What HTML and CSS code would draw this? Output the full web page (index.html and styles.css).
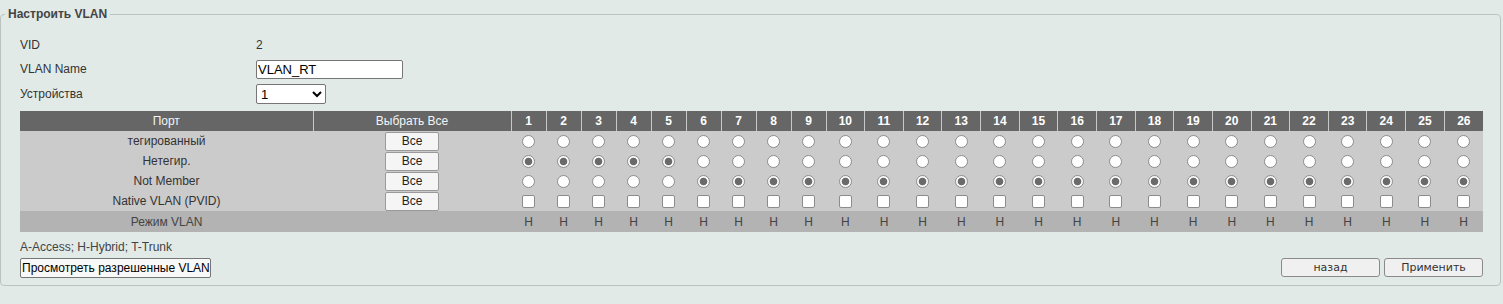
FILE: index.html
```html
<!DOCTYPE html>
<html lang="ru">
<head>
<meta charset="utf-8">
<title>Настроить VLAN</title>
<link rel="stylesheet" href="styles.css">
</head>
<body>
<fieldset class="panel">
  <legend class="panel-title">Настроить VLAN</legend>
  <div class="content">
    <div class="form">
      <div class="f-label">VID</div><div class="f-value">2</div>
      <div class="f-label">VLAN Name</div><div class="f-value"><input class="txt" type="text" value="VLAN_RT"></div>
      <div class="f-label r3">Устройства</div><div class="f-value r3"><select class="sel"><option>1</option></select></div>
    </div>
    <table class="ports">
      <colgroup>
        <col class="c-port"><col class="c-all">
        <col class="c-n"><col class="c-n"><col class="c-n"><col class="c-n"><col class="c-n"><col class="c-n"><col class="c-n"><col class="c-n"><col class="c-n">
        <col><col><col><col><col><col><col><col><col><col><col><col><col><col><col><col><col>
      </colgroup>
      <thead>
        <tr class="head">
          <th class="h-text">Порт</th><th class="h-text">Выбрать Все</th>
          <th>1</th><th>2</th><th>3</th><th>4</th><th>5</th><th>6</th><th>7</th><th>8</th><th>9</th><th>10</th><th>11</th><th>12</th><th>13</th>
          <th>14</th><th>15</th><th>16</th><th>17</th><th>18</th><th>19</th><th>20</th><th>21</th><th>22</th><th>23</th><th>24</th><th>25</th><th>26</th>
        </tr>
      </thead>
      <tbody>
        <tr class="row">
          <td>тегированный</td><td><button class="all" type="button">Все</button></td>
          <td><input class="rd" type="radio" name="p1"></td><td><input class="rd" type="radio" name="p2"></td><td><input class="rd" type="radio" name="p3"></td><td><input class="rd" type="radio" name="p4"></td><td><input class="rd" type="radio" name="p5"></td><td><input class="rd" type="radio" name="p6"></td><td><input class="rd" type="radio" name="p7"></td><td><input class="rd" type="radio" name="p8"></td><td><input class="rd" type="radio" name="p9"></td><td><input class="rd" type="radio" name="p10"></td><td><input class="rd" type="radio" name="p11"></td><td><input class="rd" type="radio" name="p12"></td><td><input class="rd" type="radio" name="p13"></td>
          <td><input class="rd" type="radio" name="p14"></td><td><input class="rd" type="radio" name="p15"></td><td><input class="rd" type="radio" name="p16"></td><td><input class="rd" type="radio" name="p17"></td><td><input class="rd" type="radio" name="p18"></td><td><input class="rd" type="radio" name="p19"></td><td><input class="rd" type="radio" name="p20"></td><td><input class="rd" type="radio" name="p21"></td><td><input class="rd" type="radio" name="p22"></td><td><input class="rd" type="radio" name="p23"></td><td><input class="rd" type="radio" name="p24"></td><td><input class="rd" type="radio" name="p25"></td><td><input class="rd" type="radio" name="p26"></td>
        </tr>
        <tr class="row">
          <td>Нетегир.</td><td><button class="all" type="button">Все</button></td>
          <td><input class="rd" type="radio" name="p1" checked></td><td><input class="rd" type="radio" name="p2" checked></td><td><input class="rd" type="radio" name="p3" checked></td><td><input class="rd" type="radio" name="p4" checked></td><td><input class="rd" type="radio" name="p5" checked></td><td><input class="rd" type="radio" name="p6"></td><td><input class="rd" type="radio" name="p7"></td><td><input class="rd" type="radio" name="p8"></td><td><input class="rd" type="radio" name="p9"></td><td><input class="rd" type="radio" name="p10"></td><td><input class="rd" type="radio" name="p11"></td><td><input class="rd" type="radio" name="p12"></td><td><input class="rd" type="radio" name="p13"></td>
          <td><input class="rd" type="radio" name="p14"></td><td><input class="rd" type="radio" name="p15"></td><td><input class="rd" type="radio" name="p16"></td><td><input class="rd" type="radio" name="p17"></td><td><input class="rd" type="radio" name="p18"></td><td><input class="rd" type="radio" name="p19"></td><td><input class="rd" type="radio" name="p20"></td><td><input class="rd" type="radio" name="p21"></td><td><input class="rd" type="radio" name="p22"></td><td><input class="rd" type="radio" name="p23"></td><td><input class="rd" type="radio" name="p24"></td><td><input class="rd" type="radio" name="p25"></td><td><input class="rd" type="radio" name="p26"></td>
        </tr>
        <tr class="row">
          <td>Not Member</td><td><button class="all" type="button">Все</button></td>
          <td><input class="rd" type="radio" name="p1"></td><td><input class="rd" type="radio" name="p2"></td><td><input class="rd" type="radio" name="p3"></td><td><input class="rd" type="radio" name="p4"></td><td><input class="rd" type="radio" name="p5"></td><td><input class="rd" type="radio" name="p6" checked></td><td><input class="rd" type="radio" name="p7" checked></td><td><input class="rd" type="radio" name="p8" checked></td><td><input class="rd" type="radio" name="p9" checked></td><td><input class="rd" type="radio" name="p10" checked></td><td><input class="rd" type="radio" name="p11" checked></td><td><input class="rd" type="radio" name="p12" checked></td><td><input class="rd" type="radio" name="p13" checked></td>
          <td><input class="rd" type="radio" name="p14" checked></td><td><input class="rd" type="radio" name="p15" checked></td><td><input class="rd" type="radio" name="p16" checked></td><td><input class="rd" type="radio" name="p17" checked></td><td><input class="rd" type="radio" name="p18" checked></td><td><input class="rd" type="radio" name="p19" checked></td><td><input class="rd" type="radio" name="p20" checked></td><td><input class="rd" type="radio" name="p21" checked></td><td><input class="rd" type="radio" name="p22" checked></td><td><input class="rd" type="radio" name="p23" checked></td><td><input class="rd" type="radio" name="p24" checked></td><td><input class="rd" type="radio" name="p25" checked></td><td><input class="rd" type="radio" name="p26" checked></td>
        </tr>
        <tr class="row">
          <td>Native VLAN (PVID)</td><td><button class="all" type="button">Все</button></td>
          <td><input class="cb" type="checkbox"></td><td><input class="cb" type="checkbox"></td><td><input class="cb" type="checkbox"></td><td><input class="cb" type="checkbox"></td><td><input class="cb" type="checkbox"></td><td><input class="cb" type="checkbox"></td><td><input class="cb" type="checkbox"></td><td><input class="cb" type="checkbox"></td><td><input class="cb" type="checkbox"></td><td><input class="cb" type="checkbox"></td><td><input class="cb" type="checkbox"></td><td><input class="cb" type="checkbox"></td><td><input class="cb" type="checkbox"></td>
          <td><input class="cb" type="checkbox"></td><td><input class="cb" type="checkbox"></td><td><input class="cb" type="checkbox"></td><td><input class="cb" type="checkbox"></td><td><input class="cb" type="checkbox"></td><td><input class="cb" type="checkbox"></td><td><input class="cb" type="checkbox"></td><td><input class="cb" type="checkbox"></td><td><input class="cb" type="checkbox"></td><td><input class="cb" type="checkbox"></td><td><input class="cb" type="checkbox"></td><td><input class="cb" type="checkbox"></td><td><input class="cb" type="checkbox"></td>
        </tr>
        <tr class="mode">
          <td>Режим VLAN</td><td></td>
          <td>H</td><td>H</td><td>H</td><td>H</td><td>H</td><td>H</td><td>H</td><td>H</td><td>H</td><td>H</td><td>H</td><td>H</td><td>H</td>
          <td>H</td><td>H</td><td>H</td><td>H</td><td>H</td><td>H</td><td>H</td><td>H</td><td>H</td><td>H</td><td>H</td><td>H</td><td>H</td>
        </tr>
      </tbody>
    </table>
    <div class="note">A-Access; H-Hybrid; T-Trunk</div>
    <div class="actions">
      <button class="btn-view" type="button">Просмотреть разрешенные VLAN</button>
      <div class="actions-right">
        <button class="btn" type="button">назад</button>
        <button class="btn" type="button">Применить</button>
      </div>
    </div>
  </div>
</fieldset>
</body>
</html>
```

FILE: styles.css
```css
html, body {
  margin: 0;
  padding: 0;
  background: #e2eae8;
}
body {
  font-family: "Liberation Sans", Arial, sans-serif;
  font-size: 12px;
  color: #333;
}
.panel {
  margin: 7px 2px 0 0;
  padding: 0 17px 7px 4px;
  border: 1px solid #bac3c0;
  border-radius: 4px;
  min-width: 0;
}
.panel-title {
  padding: 0 3px;
  font-weight: bold;
  font-size: 12px;
  line-height: 14px;
  color: #444;
}
.content {
  padding-left: 15px;
}
.form {
  display: grid;
  grid-template-columns: 236px auto;
  grid-template-rows: 24px 24px 26px;
  margin-top: 12px;
}
.f-label, .f-value {
  display: flex;
  align-items: center;
  color: #333;
}
.txt {
  box-sizing: border-box;
  width: 147px;
  height: 19px;
  margin: 0;
  padding: 0 1px;
  border: 1px solid #767676;
  border-radius: 2px;
  background: #fff;
  font-family: "Liberation Sans", Arial, sans-serif;
  font-size: 13px;
  color: #000;
}
.sel {
  box-sizing: border-box;
  width: 70px;
  height: 20px;
  margin: 0;
  border: 1px solid #767676;
  border-radius: 2px;
  background: #fff;
  font-family: "Liberation Sans", Arial, sans-serif;
  font-size: 13px;
  color: #000;
}
.ports {
  margin-top: 4px;
  width: 1463px;
  table-layout: fixed;
  border-collapse: collapse;
}
.c-port { width: 293px; }
.c-all { width: 198px; }
.c-n { width: 35px; }
.ports th, .ports td {
  padding: 0;
  text-align: center;
  vertical-align: middle;
  white-space: nowrap;
}
.head th {
  height: 20px;
  background: #666;
  color: #fff;
  font-weight: bold;
  font-size: 12px;
  border-left: 1px solid #c9c9c9;
}
.head th.h-text {
  font-weight: normal;
  color: #f4f4f4;
}
.head th:first-child {
  border-left: 0;
}
.row td {
  height: 20px;
  background: #cbcbcb;
  color: #333;
}
.mode td {
  height: 21px;
  background: #b3b3b3;
  color: #444;
}
.all {
  box-sizing: border-box;
  width: 54px;
  height: 19px;
  margin: 0;
  padding: 0;
  border: 1px solid #9a9a9a;
  border-radius: 2px;
  background: #f5f5f5;
  font-family: "Liberation Sans", Arial, sans-serif;
  font-size: 12px;
  color: #222;
  vertical-align: middle;
}
.rd {
  appearance: none;
  display: block;
  box-sizing: border-box;
  width: 13px;
  height: 13px;
  margin: 0 auto;
  border: 1px solid #8c8c8c;
  border-radius: 50%;
  background: #fff;
}
.rd:checked {
  background: radial-gradient(circle at center, #6a6a6a 0, #6a6a6a 3.4px, #fafafa 4.2px);
}
.cb {
  appearance: none;
  display: block;
  box-sizing: border-box;
  width: 13px;
  height: 13px;
  margin: 0 auto;
  border: 1px solid #8c8c8c;
  border-radius: 2px;
  background: #fff;
}
.note {
  margin-top: 8px;
  line-height: 14px;
  color: #444;
}
.actions {
  display: flex;
  justify-content: space-between;
  align-items: flex-start;
  margin-top: 4px;
}
.btn-view {
  box-sizing: border-box;
  width: 191px;
  height: 20px;
  margin: 0;
  padding: 0 1px;
  border: 1px solid #767676;
  border-radius: 2px;
  background: #f8f8f8;
  font-family: "Liberation Sans", Arial, sans-serif;
  font-size: 12px;
  color: #000;
  text-align: left;
  white-space: nowrap;
}
.actions-right {
  display: flex;
  gap: 4px;
}
.btn {
  box-sizing: border-box;
  width: 99px;
  height: 19px;
  margin: 0;
  padding: 0;
  border: 1px solid #8a8a8a;
  border-radius: 3px;
  background: #f0f0f0;
  font-family: "DejaVu Sans", Verdana, sans-serif;
  font-size: 11px;
  color: #333;
}
```
